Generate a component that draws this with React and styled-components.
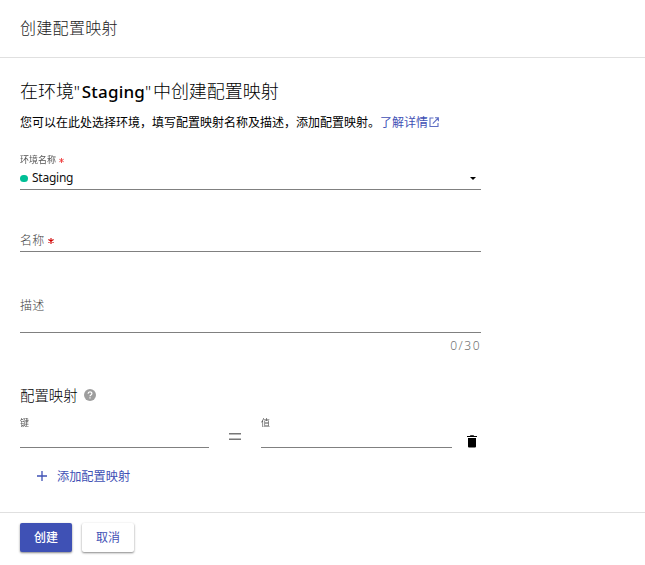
import React from 'react';
import styled, { createGlobalStyle } from 'styled-components';

const GlobalStyle = createGlobalStyle`
  * { box-sizing: border-box; }
  body {
    margin: 0;
    background: #fff;
    color: rgba(0, 0, 0, 0.87);
    font: 12px/20px "Noto Sans", "Noto Sans CJK SC", sans-serif;
  }
`;

const Page = styled.div`
  display: flex;
  flex-direction: column;
  width: 100%;
  height: 565px;
  overflow: hidden;
`;

const Header = styled.header`
  flex: none;
  height: 58px;
  padding: 15px 20px 0;
  border-bottom: 1px solid #e0e0e0;
  font-family: "Noto Sans CJK SC", sans-serif;
  font-size: 16px;
  line-height: 24px;
  font-weight: 300;
  letter-spacing: 0.3px;
  color: #222;
`;

const Content = styled.main`
  flex: none;
  display: flex;
  flex-direction: column;
  width: 501px;
  height: 454px;
  padding: 19px 20px 0;
`;

const Title = styled.h1`
  margin: 0;
  height: 28px;
  font-family: "Noto Sans", "Noto Sans CJK SC", sans-serif;
  font-size: 18px;
  line-height: 28px;
  font-weight: 300;
  letter-spacing: -0.05px;
  color: #000;
  white-space: nowrap;
`;

const Latin = styled.span`
  font-family: "Noto Sans", sans-serif;
  font-size: 17px;
  font-weight: 500;
  letter-spacing: 0.2px;
`;

const Quote = styled(Latin)`
  font-weight: 300;
  letter-spacing: 1.7px;
`;

const Intro = styled.p`
  margin: 7px 0 0;
  height: 20px;
  display: flex;
  align-items: center;
  font-family: "Noto Sans CJK SC", sans-serif;
  color: #000;
  white-space: nowrap;
`;

const Link = styled.a`
  display: inline-flex;
  align-items: center;
  color: #3f51b5;
`;

const Field = styled.div`
  display: flex;
  flex-direction: column;
  width: ${(p) => p.$width || '461px'};
  height: ${(p) => p.$height};
  margin-top: ${(p) => p.$gap || '0'};
  border-bottom: 1px solid #808080;
`;

const FloatLabel = styled.label`
  display: flex;
  align-items: center;
  height: 14px;
  font-family: "Noto Sans CJK SC", sans-serif;
  font-size: 9px;
  line-height: 14px;
  color: #555;
  filter: blur(0.4px);
`;

const Label = styled.label`
  display: flex;
  align-items: center;
  height: 20px;
  font-family: "Noto Sans CJK SC", sans-serif;
  font-weight: 300;
  letter-spacing: 0.3px;
  color: #444;
`;

const Asterisk = styled.svg`
  width: ${(p) => p.$size}px;
  height: ${(p) => p.$size}px;
  margin-left: 3px;
  margin-top: 1px;
  stroke: ${(p) => p.$color};
  stroke-width: 1.1;
`;

const Value = styled.div`
  display: flex;
  align-items: center;
  height: 20px;
  margin-top: 1px;
  padding-right: 5px;
  color: #111;
  letter-spacing: -0.25px;
`;

const StatusDot = styled.span`
  width: 8px;
  height: 7px;
  margin-right: 4px;
  border-radius: 4px;
  background: #00bf96;
`;

const Caret = styled.svg`
  width: 6px;
  height: 3px;
  margin-left: auto;
`;

const Counter = styled.div`
  height: 20px;
  margin-top: 3px;
  text-align: right;
  color: #707070;
  letter-spacing: 1.5px;
  font-family: "Noto Sans", sans-serif;
  font-size: 12px;
  font-weight: 300;
`;

const SectionTitle = styled.h2`
  display: flex;
  align-items: center;
  gap: 6px;
  height: 22px;
  margin: 28px 0 0;
  font-family: "Noto Sans CJK SC", sans-serif;
  font-size: 14.4px;
  line-height: 22px;
  font-weight: 300;
  color: #000;
`;

const PairRow = styled.div`
  display: flex;
  margin-top: 10px;
  height: 32px;
`;

const EqualsSign = styled.svg`
  width: 12px;
  height: 8px;
  margin: 17px 20px 0 20px;
  fill: #777;
`;

const TrashIcon = styled.svg`
  width: 10px;
  height: 13px;
  margin: 19px 0 0 15px;
  flex: none;
`;

const AddButton = styled.button`
  display: flex;
  align-items: center;
  gap: 10px;
  height: 24px;
  margin: 16px 0 0;
  padding: 0 0 0 17px;
  border: 0;
  background: none;
  color: #3f51b5;
  font: 400 12.2px/24px "Noto Sans CJK SC", sans-serif;
`;

const Footer = styled.footer`
  display: flex;
  gap: 10px;
  flex: 1;
  padding: 10px 20px 0;
  border-top: 1px solid #e0e0e0;
`;

const Button = styled.button`
  width: 52px;
  height: 29px;
  padding: 0 0 2px;
  border: 0;
  border-radius: 2px;
  font: ${(p) => (p.$primary ? 500 : 400)} 12px/27px "Noto Sans CJK SC", sans-serif;
  color: ${(p) => (p.$primary ? '#fff' : '#3f51b5')};
  background: ${(p) => (p.$primary ? '#3f51b5' : '#fff')};
  box-shadow: 0 1px 2px rgba(0, 0, 0, 0.38), 0 1px 3px rgba(0, 0, 0, 0.12);
`;

const introText = '您可以在此处选择环境\uFF0C填写配置映射名称及描述\uFF0C添加配置映射。';

function Required({ size, color }) {
  return (
    <Asterisk $size={size} $color={color} viewBox="0 0 6 6">
      <path d="M3 0V6M0.4 1.5L5.6 4.5M5.6 1.5L0.4 4.5" />
    </Asterisk>
  );
}

export default function App() {
  return (
    <Page>
      <GlobalStyle />
      <Header>创建配置映射</Header>
      <Content>
        <Title>
          在环境<Quote>"</Quote><Latin>Staging</Latin><Quote>"</Quote>中创建配置映射
        </Title>
        <Intro>
          {introText}
          <Link>
            了解详情
            <svg width="12" height="12" viewBox="0 0 12 12" fill="none" stroke="#5f6fc4" strokeWidth="1.1">
              <path d="M5.5 2H2V10.5H10V7M7 1.8H10.4V5.2M10.2 2L4.8 7.6" />
            </svg>
          </Link>
        </Intro>
        <Field $height="37px" $gap="21px">
          <FloatLabel>
            环境名称<Required size={5} color="#f04040" />
          </FloatLabel>
          <Value>
            <StatusDot />
            Staging
            <Caret viewBox="0 0 6 3"><path d="M0 0H6L3 3Z" /></Caret>
          </Value>
        </Field>
        <Field $height="22px" $gap="40px">
          <Label>
            名称<Required size={6} color="#d00000" />
          </Label>
        </Field>
        <Field $height="38px" $gap="43px">
          <Label>描述</Label>
        </Field>
        <Counter>0/30</Counter>
        <SectionTitle>
          配置映射
          <svg width="12" height="12" viewBox="0 0 12 12">
            <circle cx="6" cy="6" r="6" fill="#9e9e9e" />
            <path d="M4.1 4.7C4.1 2.2 7.9 2.2 7.9 4.6C7.9 6 6 6 6 7.3M6 8.3V9.6" fill="none" stroke="#fff" strokeWidth="1.2" />
          </svg>
        </SectionTitle>
        <PairRow>
          <Field $width="189px" $height="32px"><FloatLabel>键</FloatLabel></Field>
          <EqualsSign viewBox="0 0 12 8"><path d="M0 0H12V1.4H0ZM0 5.5H12V7H0Z" /></EqualsSign>
          <Field $width="191px" $height="32px"><FloatLabel>值</FloatLabel></Field>
          <TrashIcon viewBox="0 0 10 13"><path d="M0 1H2.8L3.5 0.3H6.5L7.2 1H10V2H0ZM1 3H9V11.5Q9 12.5 8 12.5H2Q1 12.5 1 11.5Z" /></TrashIcon>
        </PairRow>
        <AddButton>
          <svg width="10" height="10" viewBox="0 0 10 10" stroke="#3f51b5" strokeWidth="1.3"><path d="M5 0V10M0 5H10" /></svg>
          添加配置映射
        </AddButton>
      </Content>
      <Footer>
        <Button $primary>创建</Button>
        <Button>取消</Button>
      </Footer>
    </Page>
  );
}
